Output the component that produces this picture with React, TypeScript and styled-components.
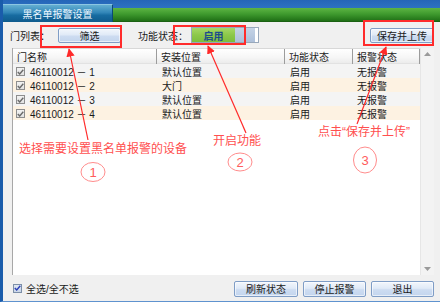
import React from "react";
import styled, { createGlobalStyle } from "styled-components";

const GlobalStyle = createGlobalStyle`
    html, body {
        margin: 0;
        padding: 0;
        background: #ffffff;
    }
    body {
        font-family: "Liberation Sans", "Noto Sans CJK SC", sans-serif;
        font-size: 10px;
        color: #1a1a1a;
    }
`;

const rows = [
    { id: "46110012 － 1", place: "默认位置", state: "启用", alarm: "无报警" },
    { id: "46110012 － 2", place: "大门", state: "启用", alarm: "无报警" },
    { id: "46110012 － 3", place: "默认位置", state: "启用", alarm: "无报警" },
    { id: "46110012 － 4", place: "默认位置", state: "启用", alarm: "无报警" },
];

const App = () => {
    return (
        <>
            <GlobalStyle />
            <Screen>
                <Frame>
                    <TitleBar>
                        <TitleTab>黑名单报警设置</TitleTab>
                    </TitleBar>

                    <Content>
                        <Toolbar>
                            <Label>门列表：</Label>
                            <WinButton $w={63} $ml={8}>筛选</WinButton>
                            <Label $ml={17}>功能状态：</Label>
                            <Toggle>
                                <ToggleOn>启用</ToggleOn>
                                <ToggleOff />
                            </Toggle>
                            <Spacer />
                            <WinButton $w={64}>保存并上传</WinButton>
                        </Toolbar>

                        <TablePanel>
                            <TableMain>
                                <HeaderRow>
                                    <HeadCell>门名称</HeadCell>
                                    <HeadCell>安装位置</HeadCell>
                                    <HeadCell>功能状态</HeadCell>
                                    <HeadCell>报警状态</HeadCell>
                                </HeaderRow>
                                {rows.map((r, i) => (
                                    <Row key={r.id} $odd={i % 2 === 1}>
                                        <Cell>
                                            <RowCheck>
                                                <CheckMark color="#6a6a6a" />
                                            </RowCheck>
                                            {r.id}
                                        </Cell>
                                        <Cell $pl={5}>{r.place}</Cell>
                                        <Cell $pl={5}>{r.state}</Cell>
                                        <Cell $pl={4}>{r.alarm}</Cell>
                                    </Row>
                                ))}
                            </TableMain>
                            <ScrollBar>
                                <ScrollArrow viewBox="0 0 7 4" width="7" height="4">
                                    <path d="M0 4 L3.5 0 L7 4 Z" fill="#9a9a9a" />
                                </ScrollArrow>
                                <ScrollArrow viewBox="0 0 7 4" width="7" height="4">
                                    <path d="M0 0 L3.5 4 L7 0 Z" fill="#9a9a9a" />
                                </ScrollArrow>
                            </ScrollBar>
                        </TablePanel>

                        <Footer>
                            <SelectAll>
                                <FooterCheck>
                                    <CheckMark color="#2b3fb8" />
                                </FooterCheck>
                                全选/全不选
                            </SelectAll>
                            <Spacer />
                            <FooterButtons>
                                <WinButton $w={64} $h={16}>刷新状态</WinButton>
                                <WinButton $w={63} $h={16}>停止报警</WinButton>
                                <WinButton $w={63} $h={16}>退出</WinButton>
                            </FooterButtons>
                        </Footer>
                    </Content>
                </Frame>

                {/* red notes drawn over the screenshot */}
                <Notes width="440" height="305" viewBox="0 0 440 305">
                    <defs>
                        <marker id="head" viewBox="0 0 10 10" refX="9" refY="5" markerWidth="7" markerHeight="7" orient="auto-start-reverse">
                            <path d="M0 0 L10 5 L0 10 Z" fill="#ff2a2a" />
                        </marker>
                    </defs>
                    <rect x="41" y="26" width="80" height="21" fill="none" stroke="#ff2b2b" strokeWidth="2" />
                    <rect x="174" y="26" width="71" height="18" fill="none" stroke="#ff2b2b" strokeWidth="2" />
                    <rect x="364" y="21" width="69" height="24" fill="none" stroke="#ff2b2b" strokeWidth="2" />

                    <line x1="88" y1="140" x2="69" y2="49" stroke="#ff2a2a" strokeWidth="1.2" markerEnd="url(#head)" />
                    <line x1="246" y1="133" x2="208" y2="46" stroke="#ff2a2a" strokeWidth="1.2" markerEnd="url(#head)" />
                    <line x1="357" y1="124" x2="386" y2="47" stroke="#ff2a2a" strokeWidth="1.2" markerEnd="url(#head)" />

                    <ellipse cx="93" cy="172" rx="12" ry="9.5" fill="none" stroke="#ff8c8c" strokeWidth="1" />
                    <ellipse cx="240" cy="162" rx="12" ry="9" fill="none" stroke="#ff8c8c" strokeWidth="1" />
                    <ellipse cx="365" cy="160" rx="11.5" ry="13" fill="none" stroke="#ff8c8c" strokeWidth="1" />
                    <NoteNum x="93" y="177">1</NoteNum>
                    <NoteNum x="240" y="167">2</NoteNum>
                    <NoteNum x="365" y="165">3</NoteNum>
                </Notes>
                <NoteText $x={19} $y={142}>选择需要设置黑名单报警的设备</NoteText>
                <NoteText $x={213} $y={134}>开启功能</NoteText>
                <NoteText $x={318} $y={125}>点击“保存并上传”</NoteText>
            </Screen>
        </>
    );
};

const CheckMark = ({ color }: { color: string }) => (
    <svg width="7" height="6" viewBox="0 0 7 6">
        <path d="M0.8 3 L2.7 5 L6.3 0.8" fill="none" stroke={color} strokeWidth="1.4" />
    </svg>
);

export default App;

// stylesheet

const Screen = styled.div`
    position: relative;
    width: 440px;
    height: 305px;
    overflow: hidden;
    background: #ffffff;
`;

const Frame = styled.div`
    display: flex;
    flex-direction: column;
    height: 302px;
    border-left: 3px solid #1a5cab;
    border-bottom: 1px solid #5f93cf;
    box-sizing: border-box;
    background: #f0f0f0;
`;

const TitleBar = styled.div`
    height: 22px;
    flex: none;
    display: flex;
    align-items: flex-end;
    background:
        linear-gradient(to bottom, #2566b8 0px, #2d72c2 8px, transparent 8px),
        linear-gradient(to bottom, #5db444 8px, #3f9a2e 14px, #1f6f16 21px, #16520f 22px);
`;

const TitleTab = styled.div`
    width: 110px;
    height: 18px;
    display: flex;
    align-items: center;
    justify-content: center;
    color: #eef7ff;
    font-family: "Noto Sans CJK SC", sans-serif;
    font-size: 10px;
    background: linear-gradient(to bottom, #63aed1 0%, #3286b8 45%, #176ca1 60%, #0f5b8d 100%);
    border-top: 1px solid #8cc6e2;
    border-right: 1px solid #0b4a76;
    box-sizing: border-box;
`;

const Content = styled.div`
    flex: 1;
    display: flex;
    flex-direction: column;
    min-height: 0;
`;

const Toolbar = styled.div`
    height: 26px;
    flex: none;
    display: flex;
    align-items: center;
    padding: 0 6px 0 7px;
`;

const Label = styled.span<{ $ml?: number }>`
    margin-left: ${(p) => p.$ml ?? 0}px;
    white-space: nowrap;
`;

const Spacer = styled.div`
    flex: 1;
`;

const WinButton = styled.div<{ $w: number; $h?: number; $ml?: number }>`
    width: ${(p) => p.$w}px;
    height: ${(p) => p.$h ?? 15}px;
    margin-left: ${(p) => p.$ml ?? 0}px;
    box-sizing: border-box;
    display: flex;
    align-items: center;
    justify-content: center;
    border: 1px solid #7f9dc6;
    border-radius: 2px;
    background: linear-gradient(to bottom, #f2f6fc 0%, #e0eaf7 45%, #cddcf1 55%, #c3d5ee 100%);
    box-shadow: inset 0 0 0 1px rgba(255, 255, 255, 0.6);
    color: #1a1a1a;
    white-space: nowrap;
`;

const Toggle = styled.div`
    display: flex;
    margin-left: 3px;
    width: 68px;
    height: 16px;
    box-sizing: border-box;
    border: 1px solid #98a8bb;
    background: #ffffff;
    padding-right: 3px;
`;

const ToggleOn = styled.div`
    width: 43px;
    display: flex;
    align-items: center;
    justify-content: center;
    font-weight: bold;
    color: #1d4c8c;
    background: linear-gradient(to bottom, #a6d865 0%, #8cc84a 50%, #7cbd3c 100%);
`;

const ToggleOff = styled.div`
    flex: 1;
    background: linear-gradient(to bottom, #c4d3e6 0%, #adc0da 100%);
`;

const TablePanel = styled.div`
    height: 227px;
    flex: none;
    display: flex;
    margin: 0 6px 0 9px;
    border-left: 1px solid #a8a8a8;
    background: #ffffff;
`;

const TableMain = styled.div`
    flex: 1;
    display: flex;
    flex-direction: column;
`;

const Columns = styled.div`
    display: grid;
    grid-template-columns: 144px 128px 68px 67px;
`;

const HeaderRow = styled(Columns)`
    height: 14px;
    border-top: 1px solid #d8d8d8;
    border-bottom: 1px solid #e2e2e2;
    background: linear-gradient(to bottom, #ffffff 0%, #f6f6f6 60%, #ececec 100%);
`;

const HeadCell = styled.div`
    display: flex;
    align-items: center;
    padding-left: 4px;
    border-right: 1px solid #9c9c9c;
    white-space: nowrap;
`;

const Row = styled(Columns)<{ $odd: boolean }>`
    height: 14px;
    background: ${(p) => (p.$odd ? "#fdf2e2" : "#f4f4f4")};
`;

const Cell = styled.div<{ $pl?: number }>`
    display: flex;
    align-items: center;
    padding-left: ${(p) => p.$pl ?? 3}px;
    white-space: nowrap;
`;

const RowCheck = styled.div`
    width: 9px;
    height: 9px;
    box-sizing: border-box;
    margin-right: 5px;
    display: flex;
    align-items: center;
    justify-content: center;
    border: 1px solid #8e8e8e;
    background: linear-gradient(to bottom, #f2f2f2, #e2e2e2);
`;

const ScrollBar = styled.div`
    width: 14px;
    display: flex;
    flex-direction: column;
    justify-content: space-between;
    align-items: center;
    padding: 4px 0 4px;
    box-sizing: border-box;
    background: #f3f3f3;
    border-left: 1px solid #e6e6e6;
`;

const ScrollArrow = styled.svg`
    display: block;
`;

const Footer = styled.div`
    flex: 1;
    display: flex;
    align-items: center;
    padding: 0 6px 0 10px;
`;

const SelectAll = styled.div`
    display: flex;
    align-items: center;
    white-space: nowrap;
`;

const FooterCheck = styled(RowCheck)`
    border-color: #7c8fa8;
    background: linear-gradient(to bottom, #dfe7f2, #c9d6e8);
    margin-right: 4px;
`;

const FooterButtons = styled.div`
    display: flex;
    gap: 5px;
    margin-top: 1px;
`;

const Notes = styled.svg`
    position: absolute;
    left: 0;
    top: 0;
    pointer-events: none;
`;

const NoteNum = styled.text`
    font-family: "Liberation Sans", sans-serif;
    font-size: 13px;
    fill: #ff5c5c;
    text-anchor: middle;
`;

const NoteText = styled.span<{ $x: number; $y: number }>`
    position: absolute;
    left: ${(p) => p.$x}px;
    top: ${(p) => p.$y}px;
    font-size: 12px;
    line-height: 14px;
    color: #ff4f4f;
    white-space: nowrap;
`;
